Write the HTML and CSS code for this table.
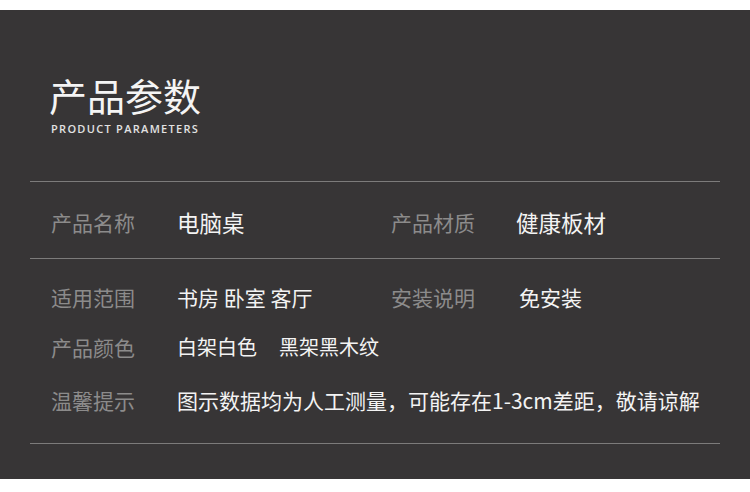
FILE: index.html
```html
<!DOCTYPE html>
<html lang="zh-CN">
<head>
    <meta charset="UTF-8">
    <meta name="viewport" content="width=device-width, initial-scale=1.0">
    <title>产品参数</title>
    <link rel="stylesheet" href="styles.css">
</head>
<body>

<div class="panel">
    <div class="head">
        <h1>产品参数</h1>
        <p class="sub">PRODUCT PARAMETERS</p>
    </div>

    <!-- first block: name + material -->
    <div class="block block-top">
        <div class="row">
            <span class="label">产品名称</span>
            <span class="value big">电脑桌</span>
            <span class="label">产品材质</span>
            <span class="value big">健康板材</span>
        </div>
    </div>

    <!-- second block: the rest -->
    <div class="block block-bottom">
        <div class="row">
            <span class="label">适用范围</span>
            <span class="value">书房 卧室 客厅</span>
            <span class="label">安装说明</span>
            <span class="value value-alt">免安装</span>
        </div>
        <div class="row row-colors">
            <span class="label">产品颜色</span>
            <span class="value wide small">白架白色<span class="gap">黑架黑木纹</span></span>
        </div>
        <div class="row row-tip">
            <span class="label">温馨提示</span>
            <span class="value wide">图示数据均为人工测量，可能存在1-3cm差距，敬请谅解</span>
        </div>
    </div>
</div>

</body>
</html>
```

FILE: styles.css
```css
body {
    margin: 0;
    background-color: #ffffff;
    font-family: "Noto Sans CJK SC", "Noto Sans", sans-serif;
}
.panel {
    margin-top: 10px;
    height: 469px;
    padding: 0 30px;
    background-color: #373536;
    box-sizing: border-box;
    overflow: hidden;
}
.head {
    padding-top: 66px;
    padding-left: 19px;
}
h1 {
    margin: 0;
    font-size: 38px;
    line-height: 38px;
    font-weight: 400;
    color: #f4f4f4;
}
.sub {
    margin: 9px 0 0 2px;
    font-family: "Open Sans", "Noto Sans", sans-serif;
    font-size: 11px;
    line-height: 12px;
    font-weight: 600;
    letter-spacing: 1.3px;
    color: #e2e2e2;
}
.block {
    border-bottom: 1px solid #7c7b7b;
    padding-left: 21px;
}
.block-top {
    margin-top: 46px;
    border-top: 1px solid #7c7b7b;
    padding-top: 29px;
    padding-bottom: 25px;
}
.block-bottom {
    padding-top: 27px;
    padding-bottom: 32px;
}
.row {
    display: grid;
    grid-template-columns: 126px 214px 125px 1fr;
    font-size: 21px;
    line-height: 22px;
    white-space: nowrap;
}
.row-colors {
    margin-top: 28px;
}
.row-tip {
    margin-top: 31px;
}
.label {
    color: #8c8b8b;
}
.value {
    color: #f3f3f3;
}
.big {
    font-size: 22.5px;
}
.small {
    font-size: 20px;
}
.value-alt {
    padding-left: 3px;
}
.wide {
    grid-column: 2 / -1;
}
.gap {
    margin-left: 22px;
}
```
